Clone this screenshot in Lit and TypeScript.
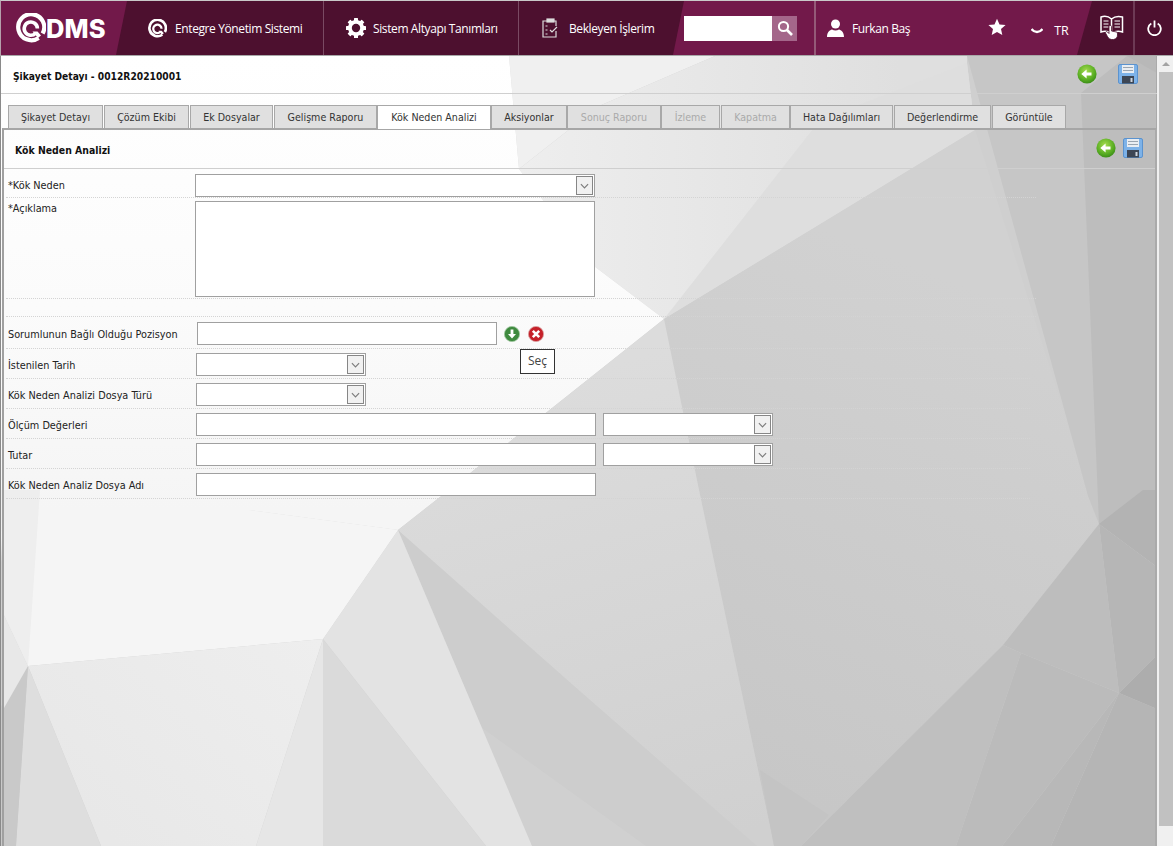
import { LitElement, html, css, svg } from "lit";
import { customElement } from "lit/decorators.js";

const polys: [string, string][] = [
  ["0,56 1157,56 1157,846 0,846", "#cfcfcf"],
  // top middle facets
  ["509,56 715,56 599,106 519,169", "#f0f0f0"],
  ["715,56 967,56 967,63 975,130 664,319 594,266 519,169 599,106", "url(#gMid)"],
  ["820,120 967,63 975,130 664,319", "#dedede"],
  // dark centre, one soft facet down to the lower edge
  ["664,319 975,130 1099,524 1003,645 801,846 774,846 699,490", "url(#gCentre)"],
  // right side
  ["967,56 1157,56 1157,524 1099,524 1088,496", "#c6c6c6"],
  ["1081,93 1127,56 1157,56 1157,524 1099,524", "#bdbdbd"],
  ["1127,56 1157,56 1157,73", "#b8b8b8"],
  // white
  ["0,56 509,56 519,169 594,266 664,319 440,497 398,530 249,510 0,510", "url(#gWhite)"],
  ["249,510 398,530 323,639", "#f3f3f3"],
  ["0,510 249,510 398,530 323,639 28,666 4,615", "#f5f5f5"],
  ["0,490 40,490 28,666 4,615", "#eeeeee"],
  // lower centre
  ["664,319 699,490 774,846 532,846 398,530 440,497", "url(#gLower)"],
  ["398,530 573,685 757,846 532,846", "#cdcdcd"],
  ["478,725 646,846 532,846", "#d0d0d0"],
  ["398,530 532,846 486,846 323,639", "#e3e3e3"],
  ["323,639 486,846 323,846", "#dadada"],
  ["28,666 323,639 256,846 101,846", "url(#gLeft)"],
  ["323,639 323,846 256,846", "#e6e6e6"],
  ["28,666 101,846 16,846", "#dedede"],
  ["28,666 16,846 0,846 0,708", "#c9c9c9"],
  ["4,615 28,666 4,708", "#e8e8e8"],
  // lower right
  ["760,770 829,815 801,846 774,846", "#c4c4c4"],
  ["1003,645 801,846 956,846 1021,653", "#bfbfbf"],
  ["1099,524 1119,693 1021,653 1003,645", "#bdbdbd"],
  ["1021,653 1119,693 1002,846 956,846", "#bbbbbb"],
  ["1119,693 1051,846 1002,846", "#b8b8b8"],
  ["1119,693 1157,709 1157,846 1051,846", "#b5b5b5"],
  ["1099,524 1157,567 1157,655 1119,693", "#b6b6b6"],
  ["1119,693 1157,655 1157,709", "#adadad"],
  ["1099,524 1143,490 1157,490 1157,567", "#b3b3b3"],
];

const bg = svg`<defs>
  <linearGradient id="gWhite" x1="0" y1="56" x2="0" y2="510" gradientUnits="userSpaceOnUse"><stop offset="0" stop-color="#ffffff"/><stop offset=".55" stop-color="#fbfbfb"/><stop offset="1" stop-color="#f5f5f5"/></linearGradient>
  <linearGradient id="gMid" x1="520" y1="150" x2="900" y2="150" gradientUnits="userSpaceOnUse"><stop offset="0" stop-color="#eeeeee"/><stop offset="1" stop-color="#dfdfdf"/></linearGradient>
  <linearGradient id="gLower" x1="560" y1="380" x2="700" y2="846" gradientUnits="userSpaceOnUse"><stop offset="0" stop-color="#dcdcdc"/><stop offset="1" stop-color="#d0d0d0"/></linearGradient>
  <linearGradient id="gLeft" x1="320" y1="640" x2="120" y2="846" gradientUnits="userSpaceOnUse"><stop offset="0" stop-color="#eeeeee"/><stop offset="1" stop-color="#e8e8e8"/></linearGradient>
  <linearGradient id="gCentre" x1="1000" y1="300" x2="800" y2="800" gradientUnits="userSpaceOnUse"><stop offset="0" stop-color="#d1d1d1"/><stop offset="1" stop-color="#c7c7c7"/></linearGradient>
</defs>${polys.map(([p, f]) => svg`<polygon points=${p} fill=${f}></polygon>`)}`;

const backIcon = html`<svg class="ico20" viewBox="0 0 20 20"><defs><radialGradient id="gb" cx=".45" cy=".35" r=".75"><stop offset="0" stop-color="#a6dc50"/><stop offset=".6" stop-color="#5aae23"/><stop offset="1" stop-color="#2c7d12"/></radialGradient></defs><circle cx="10" cy="10" r="9.6" fill="url(#gb)"/><path d="M14.5 8.4H9.6V5.4L4.3 10l5.3 4.6v-3h4.900z" fill="#fff"/></svg>`;

const saveIcon = html`<svg class="ico20" viewBox="0 0 20 20"><rect x=".5" y=".5" width="19" height="19" rx="1.5" fill="#7db2e8" stroke="#5b93cf"/><rect x="4" y="1" width="12" height="8" fill="#e9edf2"/><rect x="5" y="3" width="10" height="1" fill="#9aa5b1"/><rect x="5" y="6" width="10" height="1" fill="#9aa5b1"/><rect x="4" y="12" width="12" height="7.5" fill="#3d4654"/><rect x="12.5" y="14" width="2" height="4" fill="#cfd6de"/></svg>`;

const chevron = html`<svg class="chev" viewBox="0 0 10 6"><path d="M1 1l4 4 4-4" fill="none" stroke="#7d7d7d" stroke-width="1.3"/></svg>`;

const qRing = (cls: string) => html`<svg class=${cls} viewBox="0 0 30 30"><path d="M22.600 24.900A13 13 0 1 1 26.600 20.500" fill="none" stroke="#fff" stroke-width="4.200"/><path d="M19.600 20.200A6.600 6.600 0 1 1 21.400 15.500" fill="none" stroke="#fff" stroke-width="3.600"/><path d="M16.500 18.500l5 0 3.500 4-3 2.500z" fill="#fff"/></svg>`;

interface Tab { label: string; w: number; mr: number; active?: boolean; off?: boolean }
const tabs: Tab[] = [
  { label: "Şikayet Detayı", w: 95, mr: 1 },
  { label: "Çözüm Ekibi", w: 85, mr: 1 },
  { label: "Ek Dosyalar", w: 83, mr: 1 },
  { label: "Gelişme Raporu", w: 103, mr: 0 },
  { label: "Kök Neden Analizi", w: 114, mr: 0, active: true },
  { label: "Aksiyonlar", w: 76, mr: 0 },
  { label: "Sonuç Raporu", w: 94, mr: 0, off: true },
  { label: "İzleme", w: 59, mr: 1, off: true },
  { label: "Kapatma", w: 69, mr: 0, off: true },
  { label: "Hata Dağılımları", w: 103, mr: 1 },
  { label: "Değerlendirme", w: 97, mr: 1 },
  { label: "Görüntüle", w: 74, mr: 0 },
];

@customElement("app-root")
export class AppRoot extends LitElement {
  static styles = css`
    :host { display: block; width: 1173px; height: 846px; overflow: hidden; position: relative; background: #fff; font-family: "DejaVu Sans Condensed", "DejaVu Sans", sans-serif; font-stretch: condensed; font-size: 10.8px; color: #222; }
    * { box-sizing: border-box; }
    .bg { position: absolute; left: 0; top: 0; width: 1173px; height: 846px; }
    .page { position: relative; display: flex; flex-direction: column; height: 846px; }

    header { display: flex; height: 56px; flex: none; background: #72194a; border-top: 1px solid #c9c9c9; border-bottom: 1px solid #a8a8a8; border-left: 1px solid #b5a0ab; color: #fff; font-family: "Open Sans", sans-serif; font-stretch: normal; font-size: 12px; letter-spacing: -.39px; }
    .logo { width: 115px; flex: none; display: flex; align-items: center; padding-left: 15px; gap: 0; }
    .logo svg { width: 30px; height: 30px; flex: none; }
    .logo span { font-family: "Inter", sans-serif; font-weight: 800; font-size: 25.5px; letter-spacing: .1px; margin-left: 0; }
    .nav { width: 568px; flex: none; display: flex; background: #4d102f; clip-path: polygon(11px 0, 100% 0, calc(100% - 11px) 100%, 0 100%); }
    .item { display: flex; align-items: center; height: 100%; }
    .i1 { width: 208px; padding-left: 32px; gap: 8px; border-right: 1px solid #7a4a63; }
    .i2 { width: 195px; padding-left: 22px; gap: 7px; border-right: 1px solid #7a4a63; }
    .i3 { padding-left: 23px; gap: 10px; }
    .ring { width: 19px; height: 19px; }
    .gear { width: 20px; height: 20px; }
    .clip { width: 17px; height: 20px; }
    .search { display: flex; align-items: center; width: 130px; flex: none; }
    .search input { width: 88px; height: 25px; border: 0; background: #fff; padding: 0; }
    .sbtn { width: 25px; height: 25px; background: #a4668a; display: flex; align-items: center; justify-content: center; }
    .sbtn svg { width: 16px; height: 16px; }
    .user { width: 263px; flex: none; display: flex; align-items: center; border-left: 2px solid #945a78; padding-left: 11px; position: relative; }
    .user .person { width: 17px; height: 18px; margin-right: 8px; }
    .star { width: 18px; height: 18px; margin-left: 78px; margin-top: -3px; }
    .down { width: 12px; height: 7px; margin-left: 25px; margin-top: 6px; }
    .tr { margin-left: 11px; margin-top: 4px; font-size: 12.5px; letter-spacing: 0; }
    .right { flex: 1; display: flex; background: #4d102f; clip-path: polygon(15px 0, 100% 0, 100% 100%, 0 100%); }
    .bookc { width: 58px; flex: none; display: flex; align-items: center; padding-left: 23px; border-right: 2px solid #6d3a55; }
    .bookc svg { width: 24px; height: 26px; margin-top: -3px; }
    .powerc { flex: 1; display: flex; align-items: center; justify-content: center; }
    .powerc svg { width: 15px; height: 16px; }

    .body { flex: 1; display: flex; min-height: 0; }
    main { flex: 1; min-width: 0; border-left: 1px solid #8a8a8a; border-right: 1px solid #aaa; }
    .scroll { width: 16px; flex: none; background: #f0f0f0; padding-left: 2px; display: flex; flex-direction: column; }
    .up { height: 16px; display: flex; align-items: center; justify-content: center; }
    .up i { width: 0; height: 0; border-left: 4px solid transparent; border-right: 4px solid transparent; border-bottom: 4px solid #a3a3a3; margin-top: -1px; }
    .thumb { width: 14px; height: 754px; background: #c1c1c1; }

    .ico20 { width: 20px; height: 20px; display: block; flex: none; }
    .top { height: 38px; display: flex; align-items: center; padding: 0 19px 2px 12px; border-bottom: 1px solid #cfcfcf; margin-right: -1px; }
    .ttl { flex: 1; font-weight: 700; font-size: 10.2px; color: #111; padding-top: 6px; }
    .top .ico20:last-child { margin-left: 21px; }
    .tabs { display: flex; margin: 11px 0 0 7px; height: 23px; }
    .tab { height: 23px; border: 1px solid #a8a8a8; border-bottom: 0; background: #e0e0e0; text-align: center; line-height: 23px; font-size: 10.6px; color: #333; flex: none; }
    .tab.active { background: #fff; height: 24px; position: relative; z-index: 1; }
    .tab.off { color: #aaa; }

    .panel { margin-left: 1px; border-top: 2px solid #a6a6a6; border-left: 2px solid #a0a0a0; border-right: 2px solid #aaa; height: 718px; margin-right: -1px; }
    .phead { height: 39px; display: flex; align-items: center; padding: 0 12px 2px 11px; border-bottom: 1px solid #cfcfcf; }
    .phead b { flex: 1; font-size: 10.4px; color: #111; padding-top: 4px; }
    .phead .ico20:last-child { margin-left: 7px; }
    .row { display: grid; grid-template-columns: 187px 1fr; align-items: center; margin-left: 2px; padding-left: 2px; width: 1030px; border-bottom: 1px dotted #d4d4d4; }
    .g2 { width: 1024px; grid-template-columns: 188px 1fr; padding-top: 2px; }
    .g2 label { padding-top: 1px; }
    .first { height: 29px; align-items: start; padding-top: 5px; }
    .first label { line-height: 23px; }
    .h30 { height: 30px; }
    .h32 { height: 32px; }
    .h18 { height: 18px; }
    .ta { height: 101px; align-items: start; padding-top: 3px; }
    .ta label { line-height: 14px; padding-top: 1px; }
    label { color: #222; }
    .ctl { display: flex; align-items: center; }
    input.f, textarea.f { display: block; background: #fff; border: 1px solid #a0a0a0; padding: 0; margin: 0; resize: none; outline: none; }
    .w400 { width: 400px; height: 23px; }
    .w300 { width: 300px; height: 23px; margin-left: 1px !important; }
    textarea.f { width: 400px; height: 96px; }
    .sel { background: #fff; border: 1px solid #a0a0a0; height: 23px; display: flex; justify-content: flex-end; align-items: center; padding-right: 1px; }
    .s400 { width: 400px; }
    .s170 { width: 170px; }
    .s169 { width: 170px; margin-left: 7px; }
    .arrow { width: 17px; height: 19px; border: 1px solid #868686; background: #f1f1f1; display: flex; align-items: center; justify-content: center; }
    .chev { width: 9px; height: 6px; }
    .mini { width: 16px; height: 16px; flex: none; }
    .m1 { margin-left: 7px; }
    .m2 { margin-left: 8px; }
    .tip { position: absolute; left: 520px; top: 349px; width: 35px; height: 25px; background: #fff; border: 1px solid #333; font-family: "Open Sans", sans-serif; font-stretch: normal; font-size: 12px; color: #444; text-align: center; line-height: 22px; z-index: 5; }
  `;

  render() {
    return html`
      <svg class="bg" viewBox="0 0 1173 846">${bg}</svg>
      <div class="page">
        <header>
          <div class="logo">${qRing("")}<span>DMS</span></div>
          <nav class="nav">
            <div class="item i1">${qRing("ring")}<span>Entegre Yönetim Sistemi</span></div>
            <div class="item i2">
              <svg class="gear" viewBox="0 0 20 20"><g fill="#fff"><rect x="8" y="0" width="4" height="20" rx=".6"/><rect x="8" y="0" width="4" height="20" rx=".6" transform="rotate(45 10 10)"/><rect x="8" y="0" width="4" height="20" rx=".6" transform="rotate(90 10 10)"/><rect x="8" y="0" width="4" height="20" rx=".6" transform="rotate(135 10 10)"/></g><circle cx="10" cy="10" r="6.5" fill="none" stroke="#fff" stroke-width="3"/><circle cx="10" cy="10" r="4.2" fill="#4d102f"/></svg>
              <span>Sistem Altyapı Tanımları</span>
            </div>
            <div class="item i3">
              <svg class="clip" viewBox="0 0 17 20" fill="none" stroke="#ddd" stroke-width="1.2"><path d="M5 3H1v16h13v-6M12 3h2v5"/><rect x="5" y="1" width="7" height="3" fill="#ddd"/><path d="M3.5 8h2M3.5 12h2M3.5 16h2M8 12l2 2 5-5" /></svg>
              <span>Bekleyen İşlerim</span>
            </div>
          </nav>
          <div class="search"><input aria-label="Ara"/><div class="sbtn"><svg viewBox="0 0 16 16" fill="none" stroke="#fff"><circle cx="6.5" cy="6.5" r="4.6" stroke-width="2"/><path d="M10 10l5 5" stroke-width="2.6"/></svg></div></div>
          <div class="user">
            <svg class="person" viewBox="0 0 17 18" fill="#fff"><circle cx="8.5" cy="5" r="4.5"/><path d="M0 18c0-5 3-7 5-7.5 2 1.4 5 1.4 7 0 2 .5 5 2.500 5 7.500z"/></svg>
            <span>Furkan Baş</span>
            <svg class="star" viewBox="0 0 18 18" fill="#fff"><path d="M9 .8l2.500 5.600 6.100.6-4.600 4.100 1.300 6L9 14l-5.300 3.100 1.300-6L.4 7l6.100-.6z"/></svg>
            <svg class="down" viewBox="0 0 12 7" fill="none" stroke="#fff" stroke-width="2.300"><path d="M.5 1c3 4 8 4 11 0"/></svg>
            <span class="tr">TR</span>
          </div>
          <div class="right">
            <div class="bookc">
              <svg viewBox="0 0 24 26" fill="none" stroke="#fff"><path d="M11.500 5C8 2 4 2 1 3v15c3-1 7-1 10.500 1.500C15 17 19 17 22.500 18V3c-3.500-1-7.500-1-11 2zM11.500 5v14" stroke-width="1.500"/><path d="M3.500 7h5M3.500 10h5M3.500 13h5M14.500 7h5.500M14.500 10h5.500M14.500 13h5.500" stroke-width="1"/><path d="M9 12.500c0-1.500 2.500-1.500 2.500 0V17l5 1c1 .5 1 1.500 1 3 0 2-1 4-4 4.500-3 .5-5-1-6-3l-2-3.500c-.5-1 1-2 2-1l1.500 1.500z" fill="#fff" stroke="#4d102f" stroke-width=".8"/></svg>
            </div>
            <div class="powerc"><svg viewBox="0 0 15 16" fill="none" stroke="#fff" stroke-width="1.800"><path d="M4.300 3.500a6.300 6.300 0 1 0 6.400 0"/><path d="M7.500 .5v7"/></svg></div>
          </div>
        </header>
        <div class="body">
          <main>
            <div class="top"><div class="ttl">Şikayet Detayı - 0012R20210001</div>${backIcon}${saveIcon}</div>
            <div class="tabs">
              ${tabs.map((t) => html`<div class="tab ${t.active ? "active" : ""} ${t.off ? "off" : ""}" style="width:${t.w}px;margin-right:${t.mr}px">${t.label}</div>`)}
            </div>
            <section class="panel">
              <div class="phead"><b>Kök Neden Analizi</b>${backIcon}${saveIcon}</div>
              <div class="row first"><label>*Kök Neden</label><div class="ctl"><div class="sel s400"><div class="arrow">${chevron}</div></div></div></div>
              <div class="row ta"><label>*Açıklama</label><div class="ctl"><textarea class="f" aria-label="Açıklama"></textarea></div></div>
              <div class="row h18"></div>
              <div class="row g2 h32"><label>Sorumlunun Bağlı Olduğu Pozisyon</label><div class="ctl"><input class="f w300"/>
                <svg class="mini m1" viewBox="0 0 16 16"><circle cx="8" cy="8" r="7.600" fill="#3f8a3f" stroke="#9cc59c" stroke-width=".8"/><path d="M6.600 3.500h2.800v4.500H12L8 12.500 4 8h2.600z" fill="#fff"/></svg>
                <svg class="mini m2" viewBox="0 0 16 16"><circle cx="8" cy="8" r="7.600" fill="#c5212a" stroke="#d9a0a0" stroke-width=".8"/><path d="M4.800 4.800l6.400 6.400M11.200 4.800l-6.400 6.400" stroke="#fff" stroke-width="2.600"/></svg>
              </div></div>
              <div class="row g2 h30"><label>İstenilen Tarih</label><div class="ctl"><div class="sel s170"><div class="arrow">${chevron}</div></div></div></div>
              <div class="row g2 h30"><label>Kök Neden Analizi Dosya Türü</label><div class="ctl"><div class="sel s170"><div class="arrow">${chevron}</div></div></div></div>
              <div class="row g2 h30"><label>Ölçüm Değerleri</label><div class="ctl"><input class="f w400"/><div class="sel s169"><div class="arrow">${chevron}</div></div></div></div>
              <div class="row g2 h30"><label>Tutar</label><div class="ctl"><input class="f w400"/><div class="sel s169"><div class="arrow">${chevron}</div></div></div></div>
              <div class="row g2 h30"><label>Kök Neden Analiz Dosya Adı</label><div class="ctl"><input class="f w400"/></div></div>
            </section>
          </main>
          <aside class="scroll"><div class="up"><i></i></div><div class="thumb"></div></aside>
        </div>
      </div>
      <div class="tip">Seç</div>
    `;
  }
}
